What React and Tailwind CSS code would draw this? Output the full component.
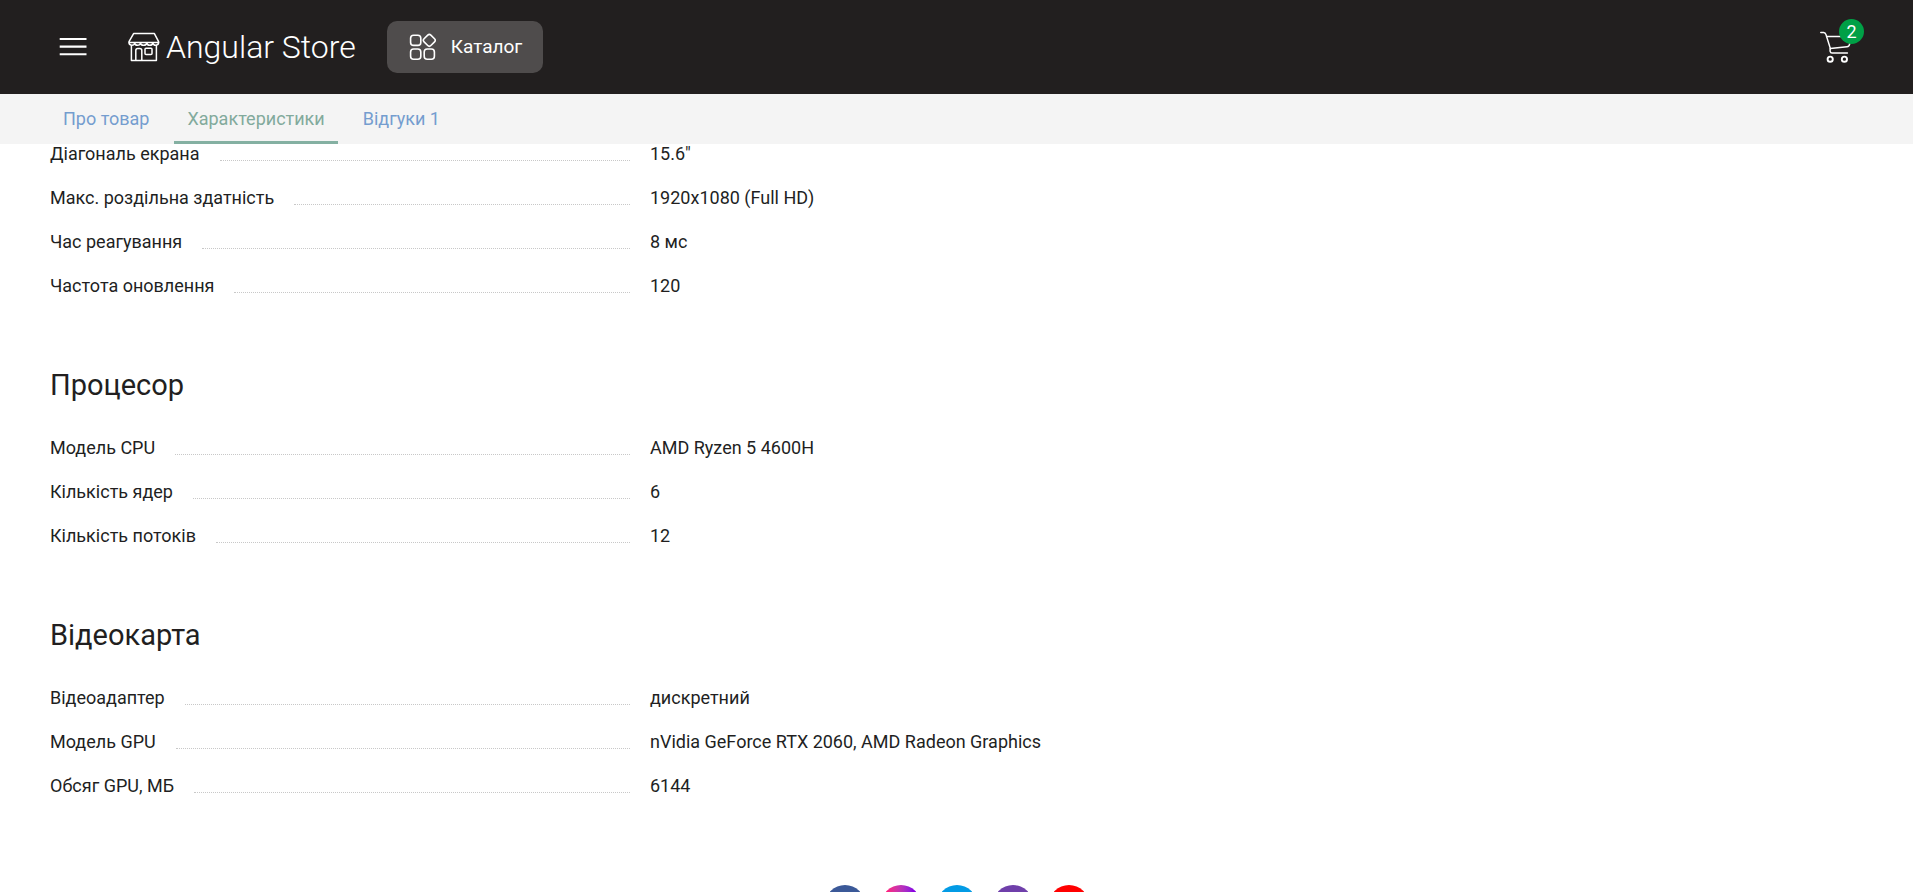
const sections = [
  {
    title: null,
    rows: [
      ["Діагональ екрана", '15.6"'],
      ["Макс. роздільна здатність", "1920x1080 (Full HD)"],
      ["Час реагування", "8 мс"],
      ["Частота оновлення", "120"],
    ],
  },
  {
    title: "Процесор",
    rows: [
      ["Модель CPU", "AMD Ryzen 5 4600H"],
      ["Кількість ядер", "6"],
      ["Кількість потоків", "12"],
    ],
  },
  {
    title: "Відеокарта",
    rows: [
      ["Відеоадаптер", "дискретний"],
      ["Модель GPU", "nVidia GeForce RTX 2060, AMD Radeon Graphics"],
      ["Обсяг GPU, МБ", "6144"],
    ],
  },
];

const socials = [
  { name: "Facebook", color: "bg-[#3b5998]" },
  { name: "Instagram", color: "bg-linear-to-r from-[#ff1f7d] from-15% to-[#8a00e0] to-80%" },
  { name: "Telegram", color: "bg-[#039be5]" },
  { name: "Viber", color: "bg-[#6f3faa]" },
  { name: "YouTube", color: "bg-[#ff0000]" },
];

function MenuIcon() {
  return (
    <svg className="h-8 w-8" viewBox="0 0 32 32" fill="none" stroke="currentColor" strokeWidth="2.1" aria-hidden="true">
      <path d="M2.7 8H29.5M2.7 15.6H29.5M2.7 23.3H29.5" />
    </svg>
  );
}

function StoreIcon() {
  return (
    <svg className="h-8 w-8" viewBox="0 0 32 32" fill="none" stroke="currentColor" strokeWidth="1.5" strokeLinejoin="round" aria-hidden="true">
      <path d="M5.6 2.6H26.4L30.6 10.6V11.6H1V10.6Z" />
      <path d="M1 11.6C1 15 6.2 15 6.6 12C7.2 15 12 15 12.4 12C13 15 18.2 15 18.8 12C19.4 15 24.2 15 24.8 12C25.4 15 30.6 15 30.6 11.6" />
      <path d="M3.4 14V29.4H28.4V14" />
      <path d="M7.8 29.4V19.4Q7.8 17.4 9.8 17.4H11.8Q13.8 17.4 13.8 19.4V29.4" />
      <rect x="17" y="17.2" width="7" height="6.4" rx="1" />
    </svg>
  );
}

function CatalogIcon() {
  return (
    <svg className="h-7 w-7" viewBox="0 0 28 28" fill="none" stroke="currentColor" strokeWidth="1.6" aria-hidden="true">
      <rect x="2.6" y="2.2" width="10.2" height="10.2" rx="3" />
      <rect x="2.6" y="16" width="10.2" height="10.2" rx="3" />
      <rect x="16.2" y="16" width="10.2" height="10.2" rx="3" />
      <rect x="16.5" y="2.5" width="9.6" height="9.6" rx="2.2" transform="rotate(45 21.3 7.3)" />
    </svg>
  );
}

function CartIcon() {
  return (
    <svg className="h-8 w-8" viewBox="0 1 32 32" fill="none" stroke="currentColor" strokeWidth="1.5" strokeLinecap="round" strokeLinejoin="round" aria-hidden="true">
      <path d="M.8 2.4H3.6C5 2.4 5.6 3.2 6 4.6L10.4 18.6" />
      <path d="M6.6 6.4H30.4L29.6 14.2Q29.2 16.6 27 16.8L10.4 18.6" />
      <path d="M10.4 18.6C9.8 20 9.8 23 12 23H27.4" />
      <circle cx="10.2" cy="29.2" r="2.6" strokeWidth="1.9" />
      <circle cx="24.4" cy="29.2" r="2.6" strokeWidth="1.9" />
    </svg>
  );
}

function Tab({ active, children }) {
  return (
    <a
      href="#"
      aria-current={active ? "page" : undefined}
      className={
        active
          ? "flex items-center border-b-3 border-[#84b0a2] px-[13px] pt-[3px] text-[#82aa9c]"
          : "flex items-center px-[13px] text-[#749dcf]"
      }
    >
      {children}
    </a>
  );
}

function SpecRow({ label, value }) {
  return (
    <div className="flex gap-5">
      <dt className="flex w-145 shrink-0 items-end gap-5">
        <span>{label}</span>
        <span className="mb-[3px] flex-1 border-b border-dotted border-[#c8c8c8]" />
      </dt>
      <dd>{value}</dd>
    </div>
  );
}

export default function App() {
  return (
    <div className="h-screen overflow-hidden bg-white font-[Roboto,'Liberation_Sans',sans-serif] text-lg leading-5 text-[#221f1f]">
      <header className="flex h-[94px] items-center bg-[#221f1f] pr-[61px] pl-[57px] text-white">
        <button type="button" aria-label="Меню">
          <MenuIcon />
        </button>
        <a href="#" className="ml-[39px] flex items-center gap-1.5 text-[32px] leading-10 font-light">
          <StoreIcon />
          Angular Store
        </a>
        <button type="button" className="ml-[31px] flex h-[52px] items-center gap-[15px] rounded-[10px] bg-[#4f4c4c] px-[21px] text-[19px]">
          <CatalogIcon />
          Каталог
        </button>
        <a href="#" aria-label="Кошик" className="relative ml-auto">
          <CartIcon />
          <span className="absolute -top-3 -right-3 flex h-[25px] w-[25px] items-center justify-center rounded-full bg-[#00a046]">2</span>
        </a>
      </header>
      <nav className="flex h-[50px] gap-3 bg-[#f4f4f4] px-[50px]">
        <Tab>Про товар</Tab>
        <Tab active>Характеристики</Tab>
        <Tab>Відгуки 1</Tab>
      </nav>
      <main className="flex flex-col gap-[69px] px-[50px]">
        {sections.map((section, i) => (
          <section key={i}>
            {section.title && <h2 className="mb-[33px] text-[29px] leading-10">{section.title}</h2>}
            <dl className="flex flex-col gap-6">
              {section.rows.map(([label, value]) => (
                <SpecRow key={label} label={label} value={value} />
              ))}
            </dl>
          </section>
        ))}
      </main>
      <footer className="mt-[89px] flex justify-center gap-4">
        {socials.map((s) => (
          <a key={s.name} href="#" aria-label={s.name} className={`h-10 w-10 rounded-full ${s.color}`} />
        ))}
      </footer>
    </div>
  );
}
